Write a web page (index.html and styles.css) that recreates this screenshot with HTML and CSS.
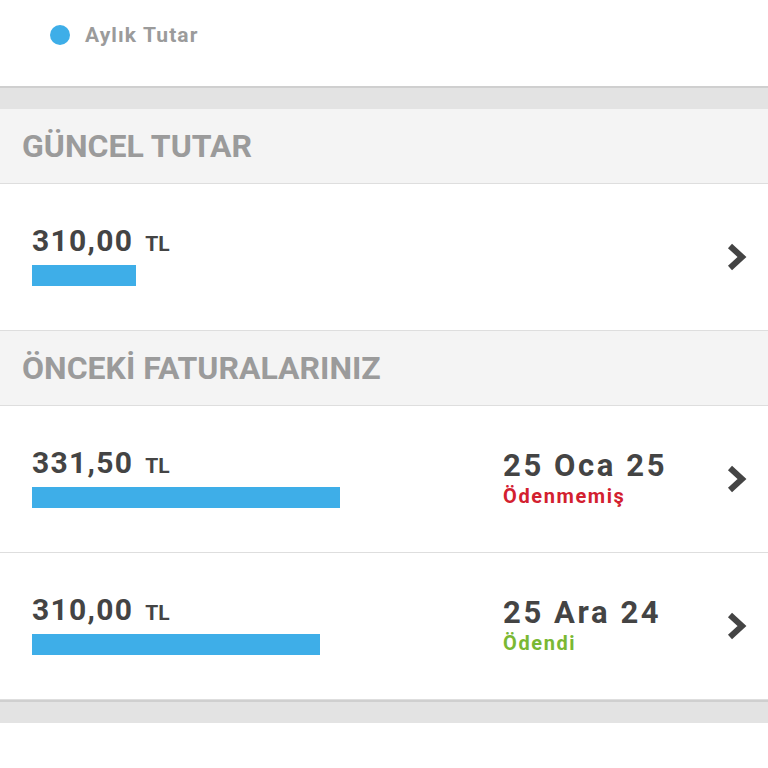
FILE: index.html
```html
<!DOCTYPE html>
<html>
  <head>
    <meta charset="UTF-8" />
    <title>Faturalarım</title>
    <link rel="stylesheet" href="styles.css">
  </head>
  <body>
    <div class="legend">
      <span class="legend-dot"></span>
      <span class="legend-label">Aylık Tutar</span>
    </div>

    <div class="divider"></div>

    <div class="section-head">GÜNCEL TUTAR</div>
    <div class="bill-row">
      <div class="bill-amount">
        <div class="amount-line">
          <span class="amount">310,00</span>
          <span class="currency">TL</span>
        </div>
        <div class="amount-bar" style="width: 104px"></div>
      </div>
      <svg class="chevron" width="22" height="28" viewBox="0 0 22 28" aria-hidden="true">
        <polyline points="4,3 16,14 4,25" />
      </svg>
    </div>

    <div class="section-head">ÖNCEKİ FATURALARINIZ</div>
    <div class="bill-row">
      <div class="bill-amount">
        <div class="amount-line">
          <span class="amount">331,50</span>
          <span class="currency">TL</span>
        </div>
        <div class="amount-bar" style="width: 308px"></div>
      </div>
      <div class="bill-date">
        <div class="date">25 Oca 25</div>
        <div class="status status-unpaid">Ödenmemiş</div>
      </div>
      <svg class="chevron" width="22" height="28" viewBox="0 0 22 28" aria-hidden="true">
        <polyline points="4,3 16,14 4,25" />
      </svg>
    </div>
    <div class="bill-row">
      <div class="bill-amount">
        <div class="amount-line">
          <span class="amount">310,00</span>
          <span class="currency">TL</span>
        </div>
        <div class="amount-bar" style="width: 288px"></div>
      </div>
      <div class="bill-date">
        <div class="date">25 Ara 24</div>
        <div class="status status-paid">Ödendi</div>
      </div>
      <svg class="chevron" width="22" height="28" viewBox="0 0 22 28" aria-hidden="true">
        <polyline points="4,3 16,14 4,25" />
      </svg>
    </div>

    <div class="divider"></div>
  </body>
</html>
```

FILE: styles.css
```css
:root {
  --text-color: #444444;
  --muted-color: #9b9b9b;
  --head-bg: #f4f4f4;
  --band-bg: #e3e3e3;
  --line-color: #dedede;
  --bar-color: #3eaee8;
  --unpaid-color: #d3202f;
  --paid-color: #7ab833;
}

body {
  margin: 0;
  width: 768px;
  font-family: Roboto, "Noto Sans", sans-serif;
  color: var(--text-color);
  background-color: #ffffff;
}

/* Chart legend */
.legend {
  display: flex;
  align-items: center;
  gap: 15px;
  height: 20px;
  padding: 25px 0 41px 50px;
}

.legend-dot {
  width: 20px;
  height: 20px;
  border-radius: 50%;
  background-color: var(--bar-color);
}

.legend-label {
  font-size: 21px;
  font-weight: 700;
  letter-spacing: 1.1px;
  color: var(--muted-color);
}

.divider {
  height: 21px;
  border-top: 2px solid #cfcfcf;
  background-color: var(--band-bg);
}

/* Section headers */
.section-head {
  display: flex;
  align-items: center;
  height: 74px;
  padding-left: 22px;
  background-color: var(--head-bg);
  border-bottom: 1px solid var(--line-color);
  font-size: 32px;
  font-weight: 700;
  letter-spacing: 0;
  color: var(--muted-color);
}

/* Bill rows */
.bill-row {
  display: flex;
  align-items: center;
  height: 146px;
  padding: 0 20px 0 32px;
  border-bottom: 1px solid var(--line-color);
}

.bill-row:last-of-type {
  border-bottom: none;
  height: 148px;
}

.bill-amount {
  flex: 1;
  display: flex;
  flex-direction: column;
  gap: 9px;
  padding-bottom: 3px;
}

.amount-line {
  display: flex;
  align-items: baseline;
  gap: 12px;
  line-height: 1;
}

.amount {
  font-size: 30px;
  font-weight: 700;
  letter-spacing: 1.3px;
}

.currency {
  font-size: 21px;
  font-weight: 700;
}

.amount-bar {
  height: 21px;
  background-color: var(--bar-color);
}

.bill-date {
  width: 202px;
  display: flex;
  flex-direction: column;
  gap: 3px;
  margin-right: 21px;
}

.date {
  font-size: 31px;
  font-weight: 700;
  letter-spacing: 2.6px;
  line-height: 1;
}

.status {
  font-size: 20px;
  font-weight: 700;
  letter-spacing: 1.6px;
  line-height: 1.2;
}

.status-unpaid {
  color: var(--unpaid-color);
}

.status-paid {
  color: var(--paid-color);
}

.chevron {
  flex-shrink: 0;
}

.chevron polyline {
  fill: none;
  stroke: var(--text-color);
  stroke-width: 6;
  stroke-linejoin: miter;
}
```
